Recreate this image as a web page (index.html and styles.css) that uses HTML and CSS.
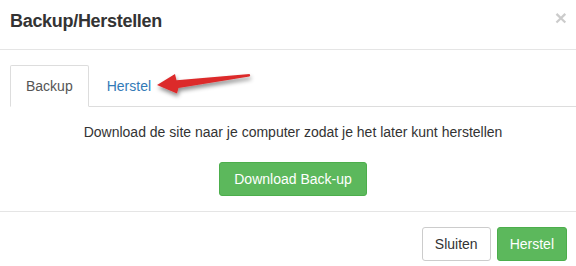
FILE: index.html
```html
<!DOCTYPE html>
<html lang="nl">
<head>
<meta charset="utf-8">
<title>Backup/Herstellen</title>
<link rel="stylesheet" href="styles.css">
</head>
<body>
<div class="modal">
  <div class="modal-header">
    <h4 class="modal-title">Backup/Herstellen</h4>
    <button class="close" type="button">×</button>
  </div>
  <div class="modal-body">
    <ul class="nav-tabs">
      <li class="active"><a>Backup</a></li>
      <li><a>Herstel</a></li>
    </ul>
    <div class="tab-pane">
      <p>Download de site naar je computer zodat je het later kunt herstellen</p>
      <button class="btn btn-success btn-download" type="button">Download Back-up</button>
    </div>
  </div>
  <div class="modal-footer">
    <button class="btn btn-default" type="button">Sluiten</button>
    <button class="btn btn-success" type="button">Herstel</button>
  </div>
  <svg class="arrow" width="115" height="45" viewBox="0 0 115 45">
    <defs>
      <filter id="shadow" x="-20%" y="-40%" width="140%" height="200%">
        <feDropShadow dx="1" dy="3" stdDeviation="2" flood-color="#000" flood-opacity="0.45"/>
      </filter>
    </defs>
    <path d="M7 20 L25 9 L26.5 15.2 L99.5 9 Q101 10.2 99.5 11.6 L28.5 23 L27 28.5 Z" fill="#dc2b2c" filter="url(#shadow)"/>
  </svg>
</div>
</body>
</html>
```

FILE: styles.css
```css
body {
  margin: 0;
  background: #fff;
  font-family: "Liberation Sans", Arial, sans-serif;
  font-size: 14px;
  color: #333;
}

.modal {
  position: relative;
  width: 576px;
  height: 266px;
  overflow: hidden;
  background: #fff;
}

.modal-header {
  display: flex;
  justify-content: space-between;
  align-items: flex-start;
  height: 49px;
  padding: 0 9px 0 10px;
  border-bottom: 1px solid #e5e5e5;
}

.modal-title {
  margin: 0;
  padding-top: 8px;
  font-size: 18px;
  line-height: 26px;
  font-weight: bold;
  letter-spacing: -0.3px;
  color: #333;
}

.close {
  margin-top: 7px;
  padding: 0;
  border: 0;
  background: none;
  font-family: "Liberation Sans", Arial, sans-serif;
  font-size: 21px;
  font-weight: bold;
  line-height: 21px;
  color: #000;
  opacity: 0.2;
}

.modal-body {
  padding: 15px 0 15px 10px;
}

.nav-tabs {
  display: flex;
  margin: 0;
  padding: 0;
  list-style: none;
  border-bottom: 1px solid #ddd;
}

.nav-tabs li {
  margin-right: 2px;
  margin-bottom: -1px;
}

.nav-tabs a {
  display: block;
  padding: 10px 15px;
  line-height: 20px;
  border: 1px solid transparent;
  border-radius: 2px 2px 0 0;
  color: #337ab7;
}

.nav-tabs .active a {
  color: #555;
  background: #fff;
  border-color: #ddd #ddd transparent;
}

.tab-pane {
  padding-top: 15px;
  text-align: center;
}

.tab-pane p {
  margin: 0 0 20px;
  line-height: 20px;
}

.btn {
  display: inline-block;
  padding: 6px 12px;
  font-family: inherit;
  font-size: 14px;
  line-height: 20px;
  border: 1px solid transparent;
  border-radius: 3px;
}

.btn-download {
  padding: 6px 14px;
}

.btn-success {
  background: #5cb85c;
  border-color: #4cae4c;
  color: #fff;
}

.btn-default {
  background: #fff;
  border-color: #ccc;
  color: #333;
}

.modal-footer {
  display: flex;
  justify-content: flex-end;
  gap: 6px;
  padding: 15px 9px 15px 10px;
  border-top: 1px solid #e5e5e5;
}

.arrow {
  position: absolute;
  left: 150px;
  top: 65px;
  pointer-events: none;
}
```
